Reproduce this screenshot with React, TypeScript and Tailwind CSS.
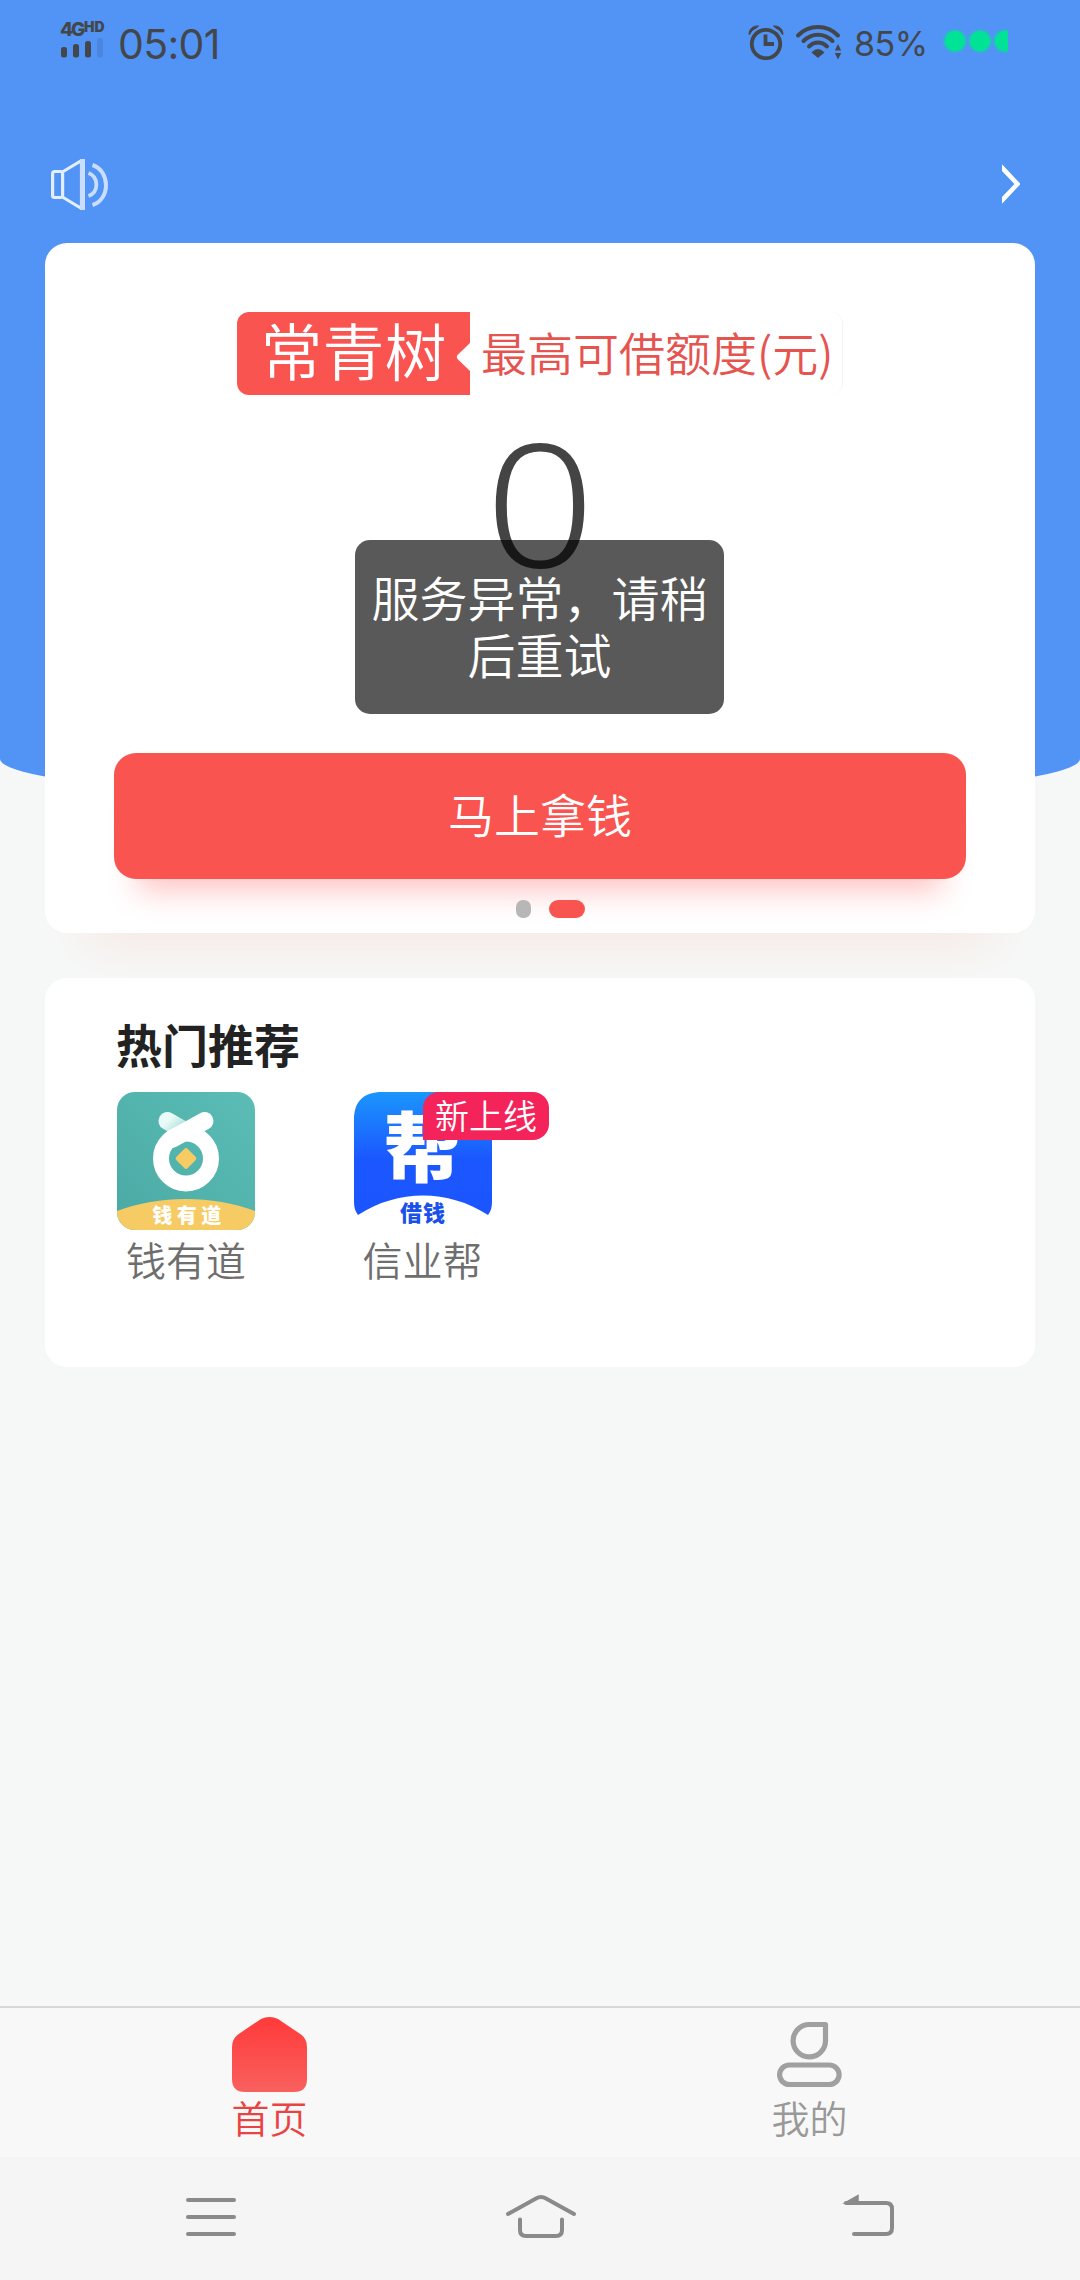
import React, { useState } from 'react';

const TABS = [
    { key: 'home', label: '首页' },
    { key: 'mine', label: '我的' },
];

const SignalIcon: React.FC = () => (
    <svg width="44" height="20" viewBox="0 0 44 20" fill="#43474c">
        <rect x="1" y="9" width="6" height="10.500" rx="2.500" />
        <rect x="13" y="6" width="6" height="13.500" rx="2.500" />
        <rect x="25" y="3" width="6" height="16.500" rx="2.500" />
        <rect x="37" y="0" width="6" height="19.500" rx="2.500" fill="#4a86de" />
    </svg>
);

const AlarmIcon: React.FC = () => (
    <svg width="36" height="36" viewBox="0 0 36 36" fill="none" stroke="#43474c">
        <circle cx="18" cy="20" r="14.2" strokeWidth="3.8" />
        <path d="M17.500 10.500v9.500h8.500" strokeWidth="3.8" />
        <path d="M1 10.500C1 5 5 1.500 10.500 2L8 4.200C5 5.500 3 7.500 2.200 9.800z" fill="#43474c" strokeWidth="1" />
        <path d="M35 10.500C35 5 31 1.500 25.500 2l2.500 2.200c3 1.300 5 3.300 5.800 5.600z" fill="#43474c" strokeWidth="1" />
    </svg>
);

const WifiIcon: React.FC = () => (
    <svg width="48" height="36" viewBox="0 0 48 36" fill="none" stroke="#43474c" strokeWidth="4" strokeLinecap="round">
        <path d="M3 11.500C14 0.300 32 0.300 43 11.500" />
        <path d="M8.500 17C17 8.700 29 8.700 37.500 17" />
        <path d="M14 22.500C19.500 17.300 26.500 17.300 32 22.500" />
        <path d="M17.500 28.500c3.400-3.300 7.600-3.300 11 0L23 33z" fill="#43474c" strokeWidth="1.500" strokeLinejoin="round" />
        <path d="M39.800 26.500l3.200-6.500 3.200 6.500zM39.800 29l3.200 6.500 3.200-6.500z" fill="#43474c" stroke="none" />
    </svg>
);

// The last dot is cut by the right edge of the svg
const BatteryDots: React.FC = () => (
    <svg width="68" height="28" viewBox="0 0 68 28" fill="#00e296">
        {[15, 40, 65].map((cx) => (
            <g key={cx}>
                <circle cx={cx} cy="14" r="12" opacity="0.350" />
                <circle cx={cx} cy="14" r="10.300" />
            </g>
        ))}
    </svg>
);

const SpeakerIcon: React.FC = () => (
    <svg width="57" height="51" viewBox="0 0 57 51" fill="none" stroke="#e3efff" strokeWidth="3.200">
        <rect x="1.600" y="12.500" width="10" height="26" rx="2" />
        <path d="M11.400 13L30.500 1.500v48L11.400 38" strokeLinejoin="round" />
        <path d="M31.500 0v51" stroke="#c9deff" strokeWidth="5" />
        <path d="M37.500 14c10.500 4 10.500 19 0 23" stroke="#c9deff" strokeWidth="3.800" />
        <path d="M41.500 6c18 6 18 34.500 0 40" stroke="#c9deff" strokeWidth="4" />
    </svg>
);

const QydLogo: React.FC = () => (
    <svg width="138" height="138" viewBox="0 0 138 138">
        <defs>
            <linearGradient id="qydBg" x1="1" y1="0" x2="0" y2="1">
                <stop offset="0" stopColor="#5bbdb6" />
                <stop offset="1" stopColor="#4ba9a4" />
            </linearGradient>
            <linearGradient id="qydLeaf" x1="0" y1="0" x2="1" y2="0.600">
                <stop offset="0" stopColor="#e9fbf8" />
                <stop offset="1" stopColor="#a6dcd6" />
            </linearGradient>
            <clipPath id="qydClip">
                <rect width="138" height="138" rx="18" />
            </clipPath>
        </defs>
        <g clipPath="url(#qydClip)">
            <rect width="138" height="138" fill="url(#qydBg)" />
            <path d="M50.500 29L69 39.500" stroke="url(#qydLeaf)" strokeWidth="18" strokeLinecap="round" />
            <path d="M87.500 29L55 47" stroke="#fff" strokeWidth="18" strokeLinecap="round" />
            <circle cx="69" cy="66.500" r="25" fill="none" stroke="#fff" strokeWidth="16" />
            <rect x="61" y="58.500" width="16" height="16" rx="2.500" fill="#f7cb63" transform="rotate(45 69 66.500)" />
            <path d="M0 119C42 103 96 103 138 119v19H0z" fill="#f7cb63" />
        </g>
        <text x="72" y="131" textAnchor="middle" fill="#fff" letterSpacing="4.500" className="text-[20px] font-black">钱有道</text>
    </svg>
);

const XybLogo: React.FC = () => (
    <svg width="138" height="138" viewBox="0 0 138 138">
        <defs>
            <linearGradient id="xybBg" x1="0" y1="0" x2="0" y2="1">
                <stop offset="0" stopColor="#1b96fd" />
                <stop offset="0.550" stopColor="#1b57ff" />
                <stop offset="1" stopColor="#1b55ff" />
            </linearGradient>
        </defs>
        <path d="M0 28C0 9 10 0 28 0h82c18 0 28 9 28 28v82c0 5-1 9-4 13C94 97 44 97 4 123c-3-4-4-8-4-13z" fill="url(#xybBg)" />
        <text x="68" y="84" textAnchor="middle" fill="#fff" className="text-[76px] font-black">帮</text>
        <text x="69" y="129" textAnchor="middle" fill="#1b50ea" letterSpacing="1" className="text-[22px] font-black">借钱</text>
    </svg>
);

const HomeTabIcon: React.FC = () => (
    <svg width="75" height="75" viewBox="0 0 75 75">
        <defs>
            <linearGradient id="homeTab" x1="0" y1="0" x2="0" y2="1">
                <stop offset="0" stopColor="#ff3a3a" />
                <stop offset="1" stopColor="#f8605e" />
            </linearGradient>
        </defs>
        <path d="M29 2Q33 0 37.500 0T46 2L69 17.500Q75 22 75 30V62Q75 75 62 75H13Q0 75 0 62V30Q0 22 6 17.500Z" fill="url(#homeTab)" />
    </svg>
);

const MineTabIcon: React.FC = () => (
    <svg width="75" height="75" viewBox="0 0 75 75" fill="none" stroke="#a0a0a0" strokeWidth="5.200">
        <path d="M37.500 7.500H53.500V24A16.200 16.200 0 1 1 37.500 7.500Z" strokeLinejoin="round" />
        <rect x="7.600" y="48" width="59.500" height="19.500" rx="9.700" />
    </svg>
);

const App: React.FC = () => {
    const [activeTab, setActiveTab] = useState<string>('home');

    return (
        <div className="w-[1080px] h-[2280px] overflow-hidden flex flex-col bg-[#f6f8f8] font-[350] font-['Noto_Sans_CJK_SC',sans-serif]">
            {/* Blue top area */}
            <header className="h-[803px] shrink-0 bg-[#5294f5] rounded-b-[50%_44px]">
                <div className="h-[84px] pl-[60px] pr-[72px] flex items-start justify-between text-[#43474c] font-['Inter',sans-serif]">
                    <div className="flex items-start">
                        <div className="w-[46px] pt-[18px] flex flex-col">
                            <div className="h-[20px] flex items-start whitespace-nowrap">
                                <span className="w-[24px] text-[19px] leading-[23px] tracking-[-2px] font-extrabold">4G</span>
                                <span className="text-[14px] leading-[18px] font-black">HD</span>
                            </div>
                            <SignalIcon />
                        </div>
                        <span className="ml-[12px] pt-[20px] text-[41px] leading-[49px] font-normal tracking-[-0.7px]">05:01</span>
                    </div>
                    <div className="flex items-start pt-[24px]">
                        <AlarmIcon />
                        <div className="ml-[11px]"><WifiIcon /></div>
                        <span className="w-[74px] ml-[11px] text-[34px] leading-[39px] font-normal whitespace-nowrap tracking-[-0.5px]">85%</span>
                        <div className="ml-[12px] mt-[3px]"><BatteryDots /></div>
                    </div>
                </div>

                {/* Notice bar */}
                <div className="h-[202px] pt-[75px] pl-[51px] pr-[60px] flex items-start justify-between">
                    <SpeakerIcon />
                    <svg className="mt-[5px]" width="18" height="40" viewBox="0 0 18 40" fill="none" stroke="#fff" strokeWidth="4.500">
                        <path d="M-2 1.500L15.500 20L-2 38.500" />
                    </svg>
                </div>
            </header>

            <main className="-mt-[560px] px-[45px] flex-1 flex flex-col">
                {/* Loan card */}
                <section className="relative h-[690px] shrink-0 bg-white rounded-[22px] flex flex-col items-center shadow-[0_50px_50px_-40px_rgba(255,120,80,0.13)]">
                    <div className="mt-[69px] w-[606px] h-[83px] flex items-start rounded-[12px] border-r border-[#f5f5f5]">
                        <div className="w-[233px] h-[83px] rounded-l-[12px] bg-[#f95450] text-white text-[62px] leading-[74px] flex justify-center relative">
                            <span>常青树</span>
                            <svg className="absolute right-0 top-[31px]" width="14" height="28" viewBox="0 0 14 28" fill="#fff">
                                <path d="M14 0L1.500 12Q0 14 1.500 16L14 28z" />
                            </svg>
                        </div>
                        <span className="ml-[11px] text-[46px] leading-[78px] text-[#e5544f] whitespace-nowrap">最高可借额度(元)</span>
                    </div>

                    <div className="mt-[16px] h-[190px] text-[172px] leading-[178px] font-[350] font-['Noto_Sans',sans-serif] text-[#444] scale-x-[1.12]">0</div>

                    <button className="mt-[152px] w-[852px] h-[126px] shrink-0 rounded-[22px] bg-[#f95450] text-white text-[46px] leading-[120px] pb-[6px] shadow-[0_36px_30px_-24px_rgba(255,70,70,0.32)]">
                        马上拿钱
                    </button>

                    <div className="mt-[21px] mr-[-21px] self-center flex gap-[18px]">
                        <span className="w-[15px] h-[18px] rounded-[7px] bg-[#b7b7b7]"></span>
                        <span className="w-[36px] h-[18px] rounded-full bg-[#f95450]"></span>
                    </div>

                    {/* Toast over the amount */}
                    <div className="absolute left-[310px] top-[297px] w-[369px] h-[174px] px-[16px] pt-[28px] rounded-[15px] bg-black/65 text-white text-[48px] leading-[57px] text-center">
                        服务异常，请稍后重试
                    </div>
                </section>

                {/* Recommended apps */}
                <section className="relative mt-[45px] h-[389px] shrink-0 bg-white rounded-[22px] pl-[71px] pt-[31px]">
                    <h2 className="text-[46px] leading-[68px] font-bold text-[#222]">热门推荐</h2>
                    <div className="mt-[15px] ml-[1px] flex gap-[99px]">
                        <div className="w-[138px] flex flex-col items-center">
                            <QydLogo />
                            <span className="mt-px text-[40px] leading-[56px] text-[#6e6e6e]">钱有道</span>
                        </div>
                        <div className="relative w-[138px] flex flex-col items-center">
                            <XybLogo />
                            <span className="mt-px -ml-px text-[40px] leading-[56px] text-[#6e6e6e]">信业帮</span>
                            <span className="absolute left-[69px] top-0 w-[126px] h-[48px] rounded-[16px] rounded-bl-none bg-[#f4245a] text-white text-[34px] leading-[46px] text-center">新上线</span>
                        </div>
                    </div>
                </section>
            </main>

            {/* Tab bar */}
            <nav className="h-[151px] shrink-0 border-t-2 border-[#d9d9d9] bg-[#f8f8f8] shadow-[0_-5px_0_#f8f8f8] flex">
                {TABS.map((tab) => (
                    <button
                        key={tab.key}
                        onClick={() => setActiveTab(tab.key)}
                        className={`flex-1 pt-[9px] pr-px flex flex-col items-center text-[38px] leading-[50px] ${
                            activeTab === tab.key ? 'text-[#ea4343]' : 'text-[#999]'
                        }`}
                    >
                        {tab.key === 'home' ? <HomeTabIcon /> : <MineTabIcon />}
                        {tab.label}
                    </button>
                ))}
            </nav>

            {/* System navigation */}
            <div className="h-[123px] shrink-0 bg-[#f5f5f5] pl-[184px] pr-[184px] pt-[36px] flex justify-between items-start">
                <svg width="54" height="46" viewBox="0 0 54 46" stroke="#8a8a8a" strokeWidth="4" strokeLinecap="round">
                    <path d="M4 7H50M4 24H50M4 41H50" />
                </svg>
                <svg width="74" height="46" viewBox="0 0 74 46" fill="none" stroke="#8a8a8a" strokeWidth="4" strokeLinecap="round">
                    <path d="M5 21L33 5.500Q38 2.500 43 5.500L71 21" />
                    <path d="M17 26.500V37Q17 43 23 43H53Q59 43 59 37V26.500" />
                </svg>
                <svg width="54" height="46" viewBox="0 0 54 46" fill="none" stroke="#8a8a8a" strokeWidth="4" strokeLinecap="round">
                    <path d="M4 10H44Q50 10 50 16V35Q50 41 44 41H12" />
                    <path d="M3 10L16 2.500V10z" fill="#8a8a8a" strokeWidth="1.500" />
                </svg>
            </div>
        </div>
    );
};

export default App;
